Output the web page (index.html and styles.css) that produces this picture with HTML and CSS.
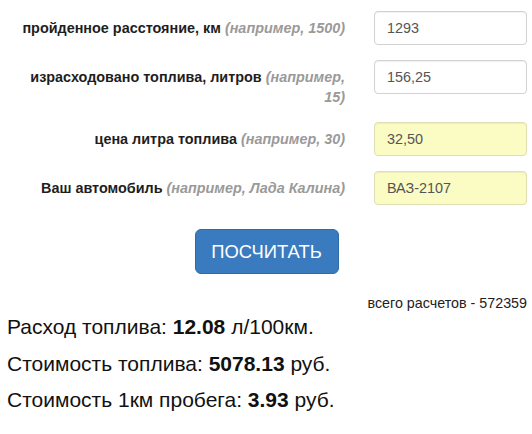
FILE: index.html
```html
<!DOCTYPE html>
<html lang="ru">
<head>
<meta charset="utf-8">
<link rel="stylesheet" href="styles.css">
</head>
<body>
<form class="calc">
  <div class="row">
    <label class="lbl">пройденное расстояние, км <span class="hint">(например, 1500)</span></label>
    <input class="field" type="text" value="1293">
  </div>
  <div class="row">
    <label class="lbl">израсходовано топлива, литров <span class="hint">(например, 15)</span></label>
    <input class="field" type="text" value="156,25">
  </div>
  <div class="row">
    <label class="lbl">цена литра топлива <span class="hint">(например, 30)</span></label>
    <input class="field filled" type="text" value="32,50">
  </div>
  <div class="row">
    <label class="lbl">Ваш автомобиль <span class="hint">(например, Лада Калина)</span></label>
    <input class="field filled" type="text" value="ВАЗ-2107">
  </div>
  <div class="actions">
    <button class="btn" type="button">ПОСЧИТАТЬ</button>
  </div>
</form>
<div class="total">всего расчетов - 572359</div>
<div class="results">
  <p>Расход топлива: <b>12.08</b> л/100км.</p>
  <p>Стоимость топлива: <b>5078.13</b> руб.</p>
  <p>Стоимость 1км пробега: <b>3.93</b> руб.</p>
</div>
</body>
</html>
```
FILE: styles.css
```css
html, body {
  margin: 0;
  padding: 0;
  background: #ffffff;
}
body {
  font-family: "Liberation Sans", Arial, sans-serif;
  color: #222;
  width: 532px;
}
.calc {
  padding-top: 11px;
}
.row {
  display: grid;
  grid-template-columns: 330px 153px;
  column-gap: 29px;
  padding-left: 15px;
  margin-bottom: 15px;
  align-items: start;
}
.lbl {
  display: block;
  text-align: right;
  font-weight: bold;
  font-size: 14.4px;
  line-height: 20px;
  padding-top: 7px;
  color: #1e1e1e;
}
.hint {
  color: #9a9a9a;
  font-style: italic;
}
.field {
  box-sizing: border-box;
  height: 34px;
  width: 153px;
  margin: 0;
  border: 1px solid #d2d2d2;
  border-radius: 4px;
  padding: 0 12px;
  font-family: "Liberation Sans", Arial, sans-serif;
  font-size: 14.4px;
  color: #555;
  background: #fff;
  box-shadow: inset 0 1px 1px rgba(0,0,0,0.06);
}
.field.filled {
  background: #fbfbc4;
  border-color: #e0dfb4;
}
.actions {
  display: flex;
  justify-content: center;
  padding-top: 9px;
  padding-left: 1px;
}
.btn {
  width: 144px;
  height: 45px;
  border: 1px solid #2e6da4;
  border-radius: 6px;
  background: #3a7bbf;
  color: #fff;
  font-family: "Liberation Sans", Arial, sans-serif;
  font-size: 18.4px;
  padding: 0;
}
.total {
  text-align: right;
  padding-right: 5px;
  font-size: 14.3px;
  line-height: 18px;
  margin-top: 20px;
  color: #222;
}
.results {
  padding-left: 7px;
  font-size: 21px;
  color: #111;
}
.results p {
  margin: 0;
  line-height: 36.5px;
}
.results p:first-child {
  margin-top: -3px;
}
```
